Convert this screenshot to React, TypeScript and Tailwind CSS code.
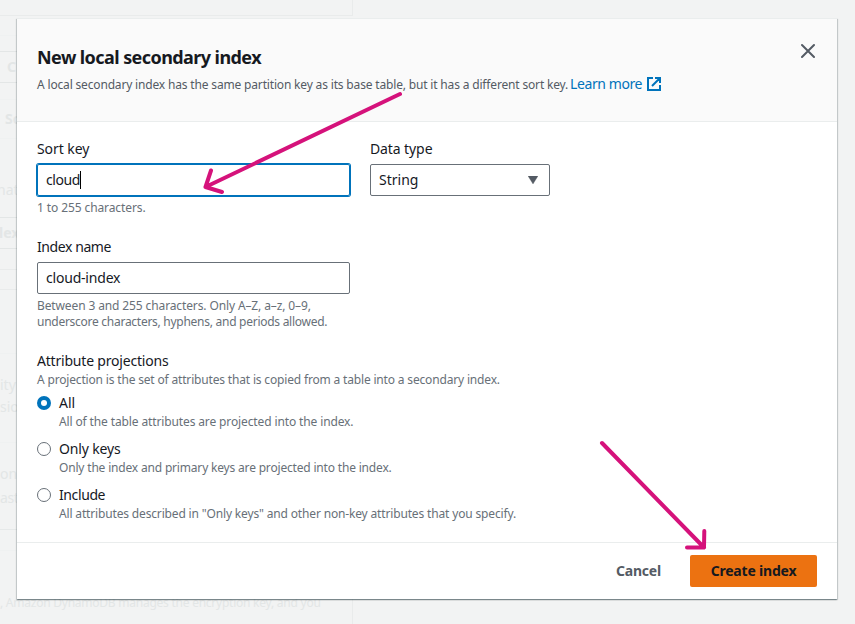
import type { ReactNode } from "react";

function Hint({ children, className = "" }: { children: ReactNode; className?: string }) {
  return <div className={`whitespace-nowrap text-[12px] leading-4 text-[#687078] ${className}`}>{children}</div>;
}

function Label({ children, className = "" }: { children: ReactNode; className?: string }) {
  return <div className={`whitespace-nowrap text-[14px] leading-[22px] ${className}`}>{children}</div>;
}

function Radio({ checked }: { checked?: boolean }) {
  return (
    <svg className="mt-1 h-[14px] w-[14px] shrink-0" viewBox="0 0 14 14">
      {checked ? (
        <>
          <circle cx="7" cy="7" r="7" fill="#0073bb" />
          <circle cx="7" cy="7" r="3" fill="#fff" />
        </>
      ) : (
        <circle cx="7" cy="7" r="6.5" fill="#fff" stroke="#687078" />
      )}
    </svg>
  );
}

function Option({ checked, label, hint, labelClass, hintClass }: { checked?: boolean; label: string; hint: string; labelClass: string; hintClass: string }) {
  return (
    <div className="flex gap-2">
      <Radio checked={checked} />
      <div>
        <Label className={labelClass}>{label}</Label>
        <Hint className={hintClass}>{hint}</Hint>
      </div>
    </div>
  );
}

function Backdrop() {
  return (
    <div className="flex h-[624px] w-[353px] flex-col text-[14px] leading-5 text-[#e3e6e6]">
      <div className="h-4 shrink-0 border-r border-b border-[#e9ebeb]" />
      <div className="mt-[19px] h-4 shrink-0 border-t border-[#eff1f1]" />
      <div className="h-8 shrink-0 border-y border-[#e3e6e6] pt-[5px] pl-[7px] font-bold">C</div>
      <div className="mt-4 h-10 shrink-0 border-y border-[#eff1f1] pt-[9px] pl-[5px] font-bold">So</div>
      <div className="h-[78px] shrink-0 pt-[41px]"><div className="-ml-[3px]">nat</div></div>
      <div className="h-8 shrink-0 border-y border-[#e3e6e6] pt-[5px] font-bold"><div className="-ml-px">lex</div></div>
      <div className="mt-5 h-[21px] shrink-0 border-y border-[#e9ebeb]" />
      <div className="mt-[63px] h-[90px] shrink-0 border-y border-[#eff1f1] pt-[21px]">
        <div>ity</div>
        <div className="mt-[2px]">sio</div>
      </div>
      <div className="h-[87px] shrink-0 border-b border-[#e6e9e9] pt-[21px]">
        <div>on</div>
        <div className="mt-1 tracking-[-0.4px]">ast</div>
      </div>
      <div className="h-[21px] shrink-0 border-b border-[#eff1f1]" />
      <div className="grow border-r border-[#e9ebeb] pt-[42px] text-[12px] tracking-[-0.24px] whitespace-nowrap">, Amazon DynamoDB manages the encryption key, and you</div>
    </div>
  );
}

function Arrows() {
  return (
    <svg className="pointer-events-none absolute inset-0 h-[624px] w-[855px]" viewBox="0 0 855 624" fill="none" stroke="#d5127b" strokeWidth="4" strokeLinecap="round" strokeLinejoin="round">
      <path d="M400 94 205.500 187M211 170.500 205.500 187 222 192" />
      <path d="M602 443 704 547.500M704.300 531 704 547.500H687" />
    </svg>
  );
}

export default function App() {
  return (
    <div className="relative h-[624px] w-[855px] overflow-hidden bg-[#f2f3f3] font-['Noto_Sans',sans-serif] text-[#16191f]">
      <Backdrop />
      <div className="absolute top-[18px] left-[17px] flex h-[581px] w-[820px] flex-col border-t border-[#eaeded] bg-white shadow-[0_1px_1px_0_rgba(0,28,36,0.3),1px_1px_1px_0_rgba(0,28,36,0.15),-1px_1px_1px_0_rgba(0,28,36,0.15)]">
        <header className="flex h-[103px] shrink-0 justify-between border-b border-[#eaeded] bg-[#fafafa] px-5 pt-[27px]">
          <div>
            <h1 className="text-[18px] leading-[22px] font-bold tracking-[-0.57px] whitespace-nowrap">New local secondary index</h1>
            <div className="mt-[5px] flex items-center leading-[22px] whitespace-nowrap">
              <span className="w-[533px] pt-px text-[12px] leading-[21px] tracking-[-0.167px] text-[#545b64]">A local secondary index has the same partition key as its base table, but it has a different sort key.</span>
              <span className="w-[77px] text-[14px] tracking-[-0.4px] text-[#0073bb]">Learn more</span>
              <svg className="h-[14px] w-[14px]" viewBox="0 0 14 14" fill="none" stroke="#0073bb" strokeWidth="2">
                <path d="M6 1H1V13H13V8M8 1H13V6M13 1 5 9" />
              </svg>
            </div>
          </div>
          <svg className="mt-[-3px] mr-[2px] h-4 w-[14px]" viewBox="0 0 14 16" fill="none" stroke="#545b64" strokeWidth="2" strokeLinecap="round">
            <path d="M1 2 13 14M13 2 1 14" />
          </svg>
        </header>
        <main className="h-[420px] shrink-0 px-5 pt-4">
          <div className="flex gap-5">
            <div className="w-[313px]">
              <Label className="tracking-[-0.08px]">Sort key</Label>
              <div className="mt-1 flex h-8 items-center rounded-[2px] border border-[#0073bb] px-2 text-[14px] shadow-[0_0_0_1px_#0073bb]">
                <span className="-mt-px tracking-[-0.45px]">cloud</span>
                <span className="h-[18px] w-px bg-black" />
              </div>
              <Hint className="mt-1 tracking-[-0.1px]">1 to 255 characters.</Hint>
            </div>
            <div className="w-[180px]">
              <Label className="tracking-[-0.1px]">Data type</Label>
              <div className="mt-1 flex h-8 items-center justify-between rounded-[2px] border border-[#687078] pr-[11px] pl-2 text-[14px]">
                <span className="-mt-px">String</span>
                <svg className="h-2 w-[10px]" viewBox="0 0 10 8"><path d="M0 0H10L5 8Z" fill="#545b64" stroke="#545b64" strokeWidth=".3" /></svg>
              </div>
            </div>
          </div>
          <div className="mt-5 w-[313px]">
            <Label className="tracking-[-0.42px]">Index name</Label>
            <div className="mt-1 flex h-8 items-center rounded-[2px] border border-[#687078] px-2 text-[14px]"><span className="-mt-px tracking-[-0.2px]">cloud-index</span></div>
            <Hint className="mt-1 tracking-[-0.12px]">Between 3 and 255 characters. Only A–Z, a–z, 0–9,</Hint>
            <Hint className="tracking-[-0.27px]">underscore characters, hyphens, and periods allowed.</Hint>
          </div>
          <div className="mt-5">
            <Label className="tracking-[-0.2px]">Attribute projections</Label>
            <Hint className="tracking-[-0.17px]">A projection is the set of attributes that is copied from a table into a secondary index.</Hint>
            <div className="mt-1 flex flex-col gap-2">
              <Option checked label="All" hint="All of the table attributes are projected into the index." labelClass="" hintClass="tracking-[-0.125px]" />
              <Option label="Only keys" hint="Only the index and primary keys are projected into the index." labelClass="tracking-[-0.16px]" hintClass="tracking-[-0.18px]" />
              <Option label="Include" hint={'All attributes described in "Only keys" and other non-key attributes that you specify.'} labelClass="tracking-[-0.4px]" hintClass="tracking-[-0.157px]" />
            </div>
          </div>
        </main>
        <footer className="flex grow items-center justify-end border-t border-[#eaeded] pr-5 text-[14px] font-bold whitespace-nowrap">
          <button className="mr-[29px] -mt-0.5 tracking-[-0.2px] text-[#545b64]">Cancel</button>
          <button className="h-8 w-[127px] rounded-[2px] bg-[#ec7211] pb-0.5 tracking-[-0.2px]">Create index</button>
        </footer>
      </div>
      <Arrows />
    </div>
  );
}
